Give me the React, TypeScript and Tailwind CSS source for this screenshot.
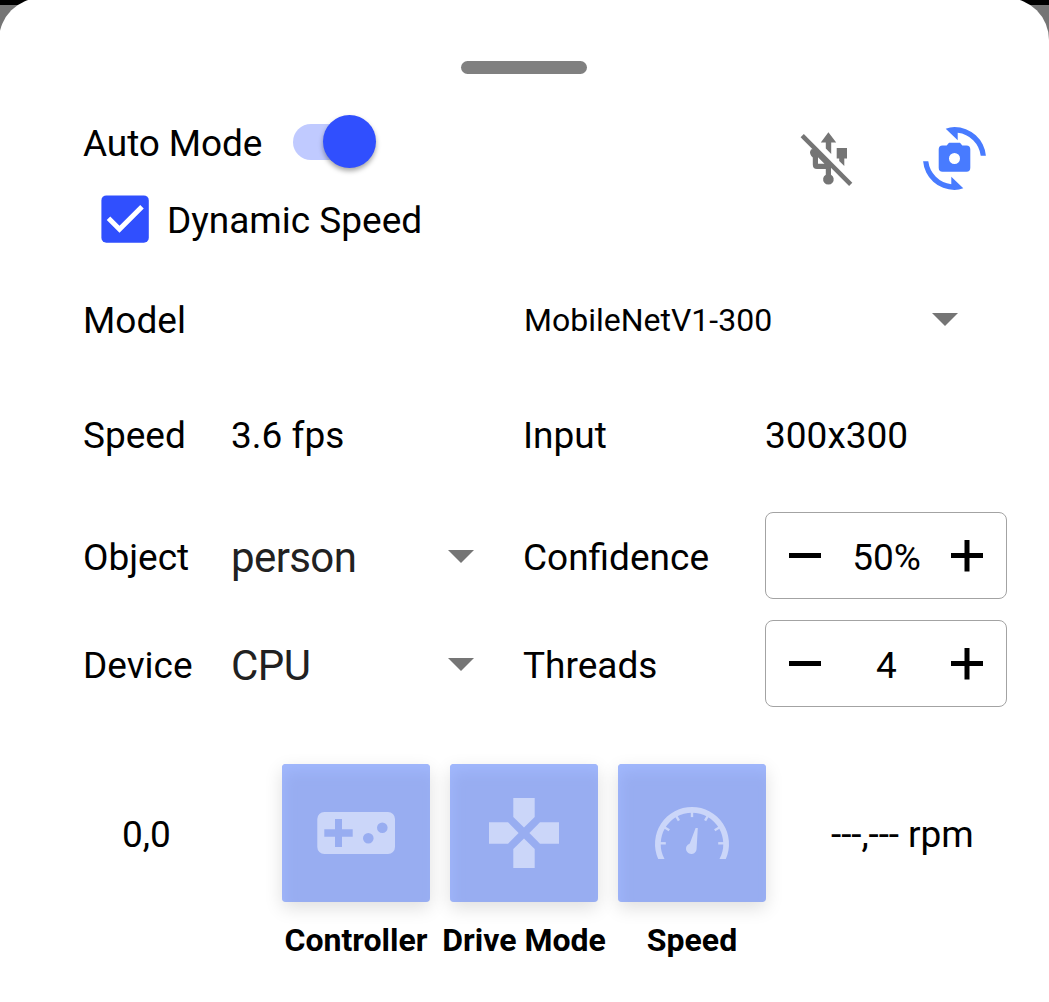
import type { ReactNode } from "react";

function Caret({ className = "" }: { className?: string }) {
  return (
    <svg width="26" height="13" viewBox="0 0 26 13" className={className}>
      <path d="M0 0h26L13 13z" fill="#757575" />
    </svg>
  );
}

function UsbOffIcon() {
  return (
    <svg width="63" height="63" viewBox="797 127 63 63" fill="#757575">
      <path d="M828.4 132.3L836.2 142.5H831.2V154L825.8 148.6V142.5H820.8Z" />
      <path d="M836.7 148H847V158.4H844.3V166L839.2 161V158.4H836.7Z" />
      <path d="M811 149.5L815 148.5L831 164.5V174.7A5.3 5.3 0 1 1 825.8 174.7V169H817Q812.8 169 812.8 164.5V157.6Q808.5 153.5 811 149.5ZM818 157.3V163.8H824.5Z" />
      <path d="M803.8 134L852.3 182.8L849.1 186L800.6 137.2Z" />
    </svg>
  );
}

function FlipCameraIcon() {
  return (
    <svg width="63" height="63" viewBox="-31.5 -31.5 63 63" fill="#487bff">
      <path d="M-8.8-29.8Q-4.5-31.5 0-31.5A31.5 31.5 0 0 1 31.4-2.8H26.2A26.2 26.2 0 0 0 3.2-25.7V-18.3Z" />
      <path transform="rotate(180)" d="M-8.8-29.8Q-4.5-31.5 0-31.5A31.5 31.5 0 0 1 31.4-2.8H26.2A26.2 26.2 0 0 0 3.2-25.7V-18.3Z" />
      <path fillRule="evenodd" d="M-12-13H-7.8L-5.5-15.7H5.5L7.8-13H12Q15.8-13 15.8-9V9.2Q15.8 13.2 12 13.2H-12Q-15.8 13.2-15.8 9.2V-9Q-15.8-13-12-13ZM0-5.5A5.5 5.5 0 1 0 0 5.5A5.5 5.5 0 1 0 0-5.5Z" />
    </svg>
  );
}

function Stepper({ value }: { value: string }) {
  return (
    <div className="flex h-[87px] w-[242px] items-center rounded-[8px] border border-[#a3a3a3]">
      <svg width="32" height="32" viewBox="0 0 32 32" className="ml-[23px]">
        <path d="M0 13h32v5H0z" />
      </svg>
      <span className="flex-1 pt-[3px] pl-[1px] text-center">{value}</span>
      <svg width="32" height="32" viewBox="0 0 32 32" className="mr-[23px]">
        <path d="M0 13h13.5V0h5v13h13.5v5H18.5V31.5h-5V18H0z" />
      </svg>
    </div>
  );
}

function Tile({ label, children }: { label: string; children: ReactNode }) {
  return (
    <div className="flex w-[148px] flex-col items-center">
      <button className="block h-[138px] w-[148px] rounded-[4px] bg-[#98adf1] shadow-[0_6px_18px_rgba(0,0,0,0.13),inset_4px_10px_14px_-3px_#a1b8fd]">
        <svg width="148" height="138" viewBox="0 0 148 138" fill="#cbd6f9">
          {children}
        </svg>
      </button>
      <span className="mt-[17px] text-[32px] leading-[42px] font-bold whitespace-nowrap">{label}</span>
    </div>
  );
}

const ticks = [0, 30, 60, 90, 120, 150, 180];
const row = "grid grid-cols-[148px_292px_242px_1fr] items-center";

export default function App() {
  return (
    <div className="h-[1002px] w-[1049px] overflow-hidden bg-[linear-gradient(#000_5px,#757575_5px)] font-['Roboto',sans-serif] text-[37px] leading-[43px] text-black">
      <main className="-mt-[2px] -ml-[1px] flex h-[1004px] w-[1050px] flex-col rounded-t-[42px] bg-white pl-[84px]">
        <div className="mt-[63px] ml-[378px] h-[13px] w-[126px] shrink-0 rounded-full bg-[#808080]" />

        <section className="mt-[40px] flex h-[130px] shrink-0 justify-between pr-[63px]">
          <div>
            <div className="flex h-[56px] items-center">
              <span className="w-[210px] pt-[2px] tracking-[-0.1px]">Auto Mode</span>
              <div className="-mt-[1px] flex h-[36px] w-[74px] items-center justify-end rounded-full bg-[#c0caff]">
                <div className="-mr-[9px] h-[53px] w-[53px] shrink-0 rounded-full bg-[#304ffe] shadow-[0_3px_5px_rgba(0,0,0,0.35)]" />
              </div>
            </div>
            <div className="mt-[25px] ml-[18px] flex h-[48px] items-center">
              <svg width="48" height="48" viewBox="0 0 48 48">
                <rect x="0.4" y="0.4" width="47.4" height="47.4" rx="5" fill="#304ffe" />
                <path d="M7.5 23.2L18.5 34.2L41 11.7" fill="none" stroke="#fff" strokeWidth="5" />
              </svg>
              <span className="ml-[18px] pt-[2px]">Dynamic Speed</span>
            </div>
          </div>
          <div className="mt-[13px] flex h-[63px] gap-[63px]">
            <UsbOffIcon />
            <FlipCameraIcon />
          </div>
        </section>

        <section className={`${row} mt-[53px] h-[44px] shrink-0`}>
          <span className="col-span-2 pt-[2px]">Model</span>
          <div className="col-span-2 flex items-center pl-[1px] text-[32px]">
            <span className="w-[408px] pt-[2px]">MobileNetV1-300</span>
            <Caret />
          </div>
        </section>

        <section className={`${row} mt-[72px] h-[44px] shrink-0`}>
          <span>Speed</span>
          <span>3.6 fps</span>
          <span>Input</span>
          <span>300x300</span>
        </section>

        <section className={`${row} mt-[55px] h-[87px] shrink-0`}>
          <span className="pt-[3px]">Object</span>
          <div className="flex items-center text-[42px] tracking-[-0.6px] text-[#212121]">
            <span className="w-[217px] pt-[3px]">person</span>
            <Caret className="mt-[2px]" />
          </div>
          <span className="pt-[3px]">Confidence</span>
          <Stepper value="50%" />
        </section>

        <section className={`${row} mt-[21px] h-[87px] shrink-0`}>
          <span className="pt-[3px]">Device</span>
          <div className="flex items-center text-[42px] tracking-[-0.6px] text-[#212121]">
            <span className="w-[217px] pt-[3px]">CPU</span>
            <Caret className="mt-[2px]" />
          </div>
          <span className="pt-[3px]">Threads</span>
          <Stepper value="4" />
        </section>

        <section className="mt-[57px] flex">
          <span className="w-[199px] pt-[49px] pl-[39px]">0,0</span>
          <div className="flex gap-[20px]">
            <Tile label="Controller">
              <path
                fillRule="evenodd"
                d="M42.3 48H106a7 7 0 0 1 7 7V83a7 7 0 0 1-7 7H42.3a7 7 0 0 1-7-7V55a7 7 0 0 1 7-7ZM53 55V65.3H42.3V72.7H53V83H60V72.7H70.7V65.3H60V55ZM100.3 58.4a5.3 5.3 0 1 0 0 10.6a5.3 5.3 0 1 0 0-10.6ZM86.3 69a5.3 5.3 0 1 0 0 10.6a5.3 5.3 0 1 0 0-10.6Z"
              />
            </Tile>
            <Tile label="Drive Mode">
              {[0, 90, 180, 270].map((a) => (
                <path key={a} transform={`rotate(${a} 74 69)`} d="M63.3 34H84.7V53L74 63.6L63.3 53Z" />
              ))}
            </Tile>
            <Tile label="Speed">
              <path d="M40.2 95A37 37 0 1 1 107.8 95H101.5A31.3 31.3 0 1 0 46.5 95Z" />
              {ticks.map((a) => (
                <rect key={a} x="42" y="78.1" width="5.8" height="2.4" transform={`rotate(${a} 74 79.3)`} />
              ))}
              <path d="M77.6 64H79.8L78.6 84.7A5.3 5.3 0 1 1 69.8 80.7L71.8 79.6Z" />
            </Tile>
          </div>
          <span className="pt-[49px] pl-[65px] tracking-[-0.1px] whitespace-nowrap">---,--- rpm</span>
        </section>
      </main>
    </div>
  );
}
